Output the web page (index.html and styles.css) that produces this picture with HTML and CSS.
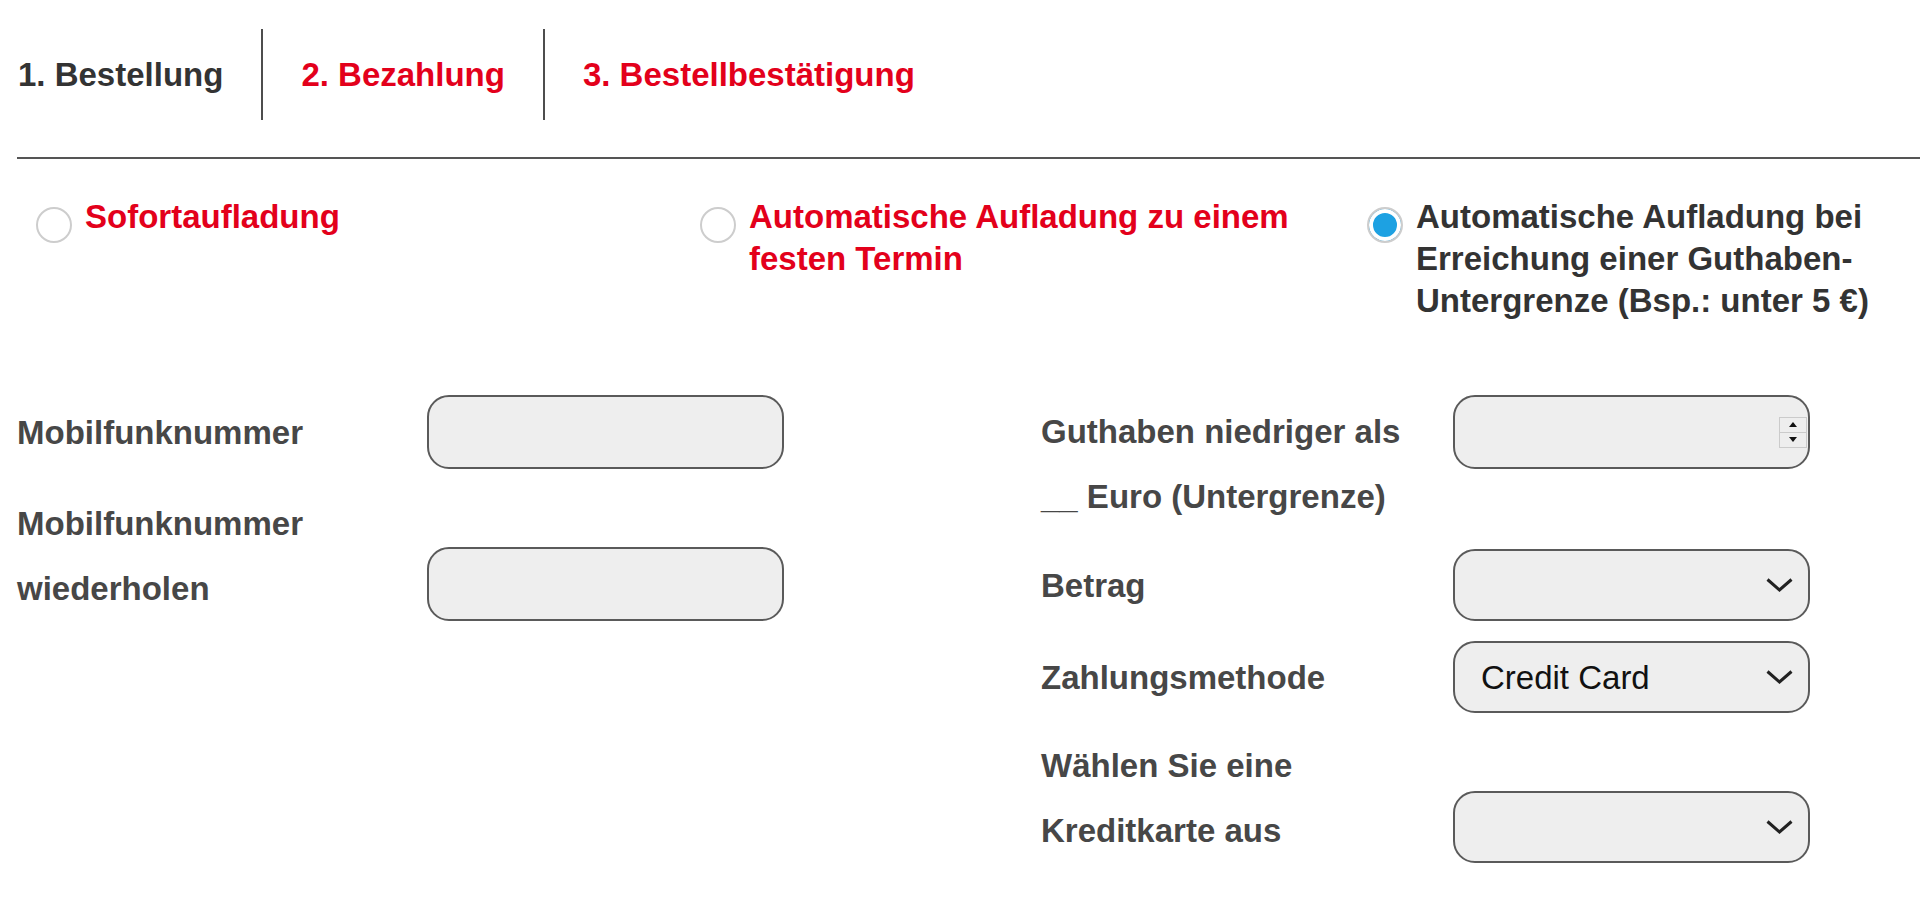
FILE: index.html
```html
<!DOCTYPE html>
<html lang="de">

<head>
  <meta charset="UTF-8">
  <title>Aufladung – Bezahlung</title>
  <link rel="stylesheet" href="styles.css">
</head>

<body>
  <div class="page">
    <ul class="steps">
      <li class="step done">1. Bestellung</li>
      <li class="step">2. Bezahlung</li>
      <li class="step">3. Bestellbestätigung</li>
    </ul>
    <hr class="divider">

    <div class="options">
      <label class="option">
        <input type="radio" name="mode">
        <span>Sofortaufladung</span>
      </label>
      <label class="option">
        <input type="radio" name="mode">
        <span>Automatische Aufladung zu einem festen Termin</span>
      </label>
      <label class="option active">
        <input type="radio" name="mode" checked>
        <span>Automatische Aufladung bei Erreichung einer Guthaben-Untergrenze (Bsp.: unter 5 €)</span>
      </label>
    </div>

    <form class="topup">
      <div class="col col-left">
        <div class="field">
          <label for="msisdn">Mobilfunknummer</label>
          <input class="text-input" id="msisdn" type="text">
        </div>
        <div class="field end">
          <label for="msisdn2">Mobilfunknummer wiederholen</label>
          <input class="text-input" id="msisdn2" type="text">
        </div>
      </div>

      <div class="col col-right">
        <div class="field start">
          <label for="limit">Guthaben niedriger als __ Euro (Untergrenze)</label>
          <div class="box">
            <input id="limit" type="number">
            <span class="spin">
              <span class="spin-btn"><svg width="8" height="5" viewBox="0 0 8 5"><path d="M0 5L4 0L8 5Z" /></svg></span>
              <span class="spin-btn"><svg width="8" height="5" viewBox="0 0 8 5"><path d="M0 0L8 0L4 5Z" /></svg></span>
            </span>
          </div>
        </div>
        <div class="field">
          <label for="amount">Betrag</label>
          <div class="box select-box">
            <select id="amount">
              <option></option>
            </select>
            <svg class="chevron" width="27" height="14" viewBox="0 0 27 14"><path d="M1.5 1.5L13.5 12L25.5 1.5" /></svg>
          </div>
        </div>
        <div class="field">
          <label for="method">Zahlungsmethode</label>
          <div class="box select-box">
            <select id="method">
              <option>Credit Card</option>
            </select>
            <svg class="chevron" width="27" height="14" viewBox="0 0 27 14"><path d="M1.5 1.5L13.5 12L25.5 1.5" /></svg>
          </div>
        </div>
        <div class="field end">
          <label for="card">Wählen Sie eine Kreditkarte aus</label>
          <div class="box select-box">
            <select id="card">
              <option></option>
            </select>
            <svg class="chevron" width="27" height="14" viewBox="0 0 27 14"><path d="M1.5 1.5L13.5 12L25.5 1.5" /></svg>
          </div>
        </div>
      </div>
    </form>
  </div>
</body>

</html>
```

FILE: styles.css
```css
body {
  margin: 0;
  font-family: "Liberation Sans", Arial, sans-serif;
  color: #333;
  background: #fff;
  overflow-x: hidden;
}

.page {
  padding-left: 17px;
}

/* steps */
.steps {
  list-style: none;
  margin: 29px 0 0;
  padding: 0 0 0 1px;
  display: flex;
}

.step {
  font-size: 33px;
  font-weight: bold;
  line-height: 91px;
  padding: 0 38px;
  color: #e3001b;
  border-left: 2px solid #4d4d4d;
}

.step.done {
  color: #333;
  padding-left: 0;
  border-left: none;
}

.divider {
  margin: 37px 0 0;
  height: 0;
  border: 0;
  border-top: 2px solid #555;
}

/* radio options */
.options {
  display: grid;
  grid-template-columns: 664px 667px 1fr;
  padding-left: 19px;
  margin-top: 37px;
}

.option {
  display: flex;
  align-items: flex-start;
  gap: 13px;
  font-size: 33px;
  font-weight: bold;
  line-height: 42px;
  color: #e3001b;
}

.option.active {
  color: #333;
}

.option input {
  appearance: none;
  -webkit-appearance: none;
  flex: none;
  box-sizing: border-box;
  width: 36px;
  height: 36px;
  margin: 11px 0 0;
  border: 2px solid #cdcdcd;
  border-radius: 50%;
  background: #fff;
}

.option input:checked {
  background: #1da1e2;
  box-shadow: inset 0 0 0 4px #fff;
}

/* form */
.topup {
  display: grid;
  grid-template-columns: 1024px 1fr;
  margin-top: 73px;
}

.col {
  display: flex;
  flex-direction: column;
  gap: 20px;
}

.col-left {
  gap: 22px;
}

.field {
  display: flex;
  align-items: center;
}

.field.start {
  align-items: flex-start;
}

.field.start label {
  margin-top: 4px;
}

.field.end {
  align-items: flex-end;
}

.field label {
  flex: 0 0 410px;
  box-sizing: border-box;
  padding-right: 30px;
  font-size: 33px;
  font-weight: bold;
  line-height: 65px;
  color: #474747;
}

.col-right .field label {
  flex-basis: 412px;
}

.text-input,
.box {
  box-sizing: border-box;
  width: 357px;
  height: 74px;
  border: 2px solid #5a5a5a;
  border-radius: 22px;
  background: #eee;
}

.text-input {
  padding: 0 26px;
  font: 33px "Liberation Sans", Arial, sans-serif;
}

.box {
  display: flex;
  align-items: center;
}

.box input {
  flex: 1;
  min-width: 0;
  height: 100%;
  padding: 0 26px;
  border: none;
  background: transparent;
  font: 33px "Liberation Sans", Arial, sans-serif;
  -moz-appearance: textfield;
}

.box input::-webkit-inner-spin-button,
.box input::-webkit-outer-spin-button {
  -webkit-appearance: none;
  margin: 0;
}

.spin {
  display: flex;
  flex-direction: column;
  box-sizing: border-box;
  width: 28px;
  height: 31px;
  margin-right: 1px;
  border: 1px solid #cbcbcb;
}

.spin-btn {
  flex: 1;
  display: flex;
  align-items: center;
  justify-content: center;
}

.spin-btn + .spin-btn {
  border-top: 1px solid #cbcbcb;
}

.spin-btn path {
  fill: #111;
}

.select-box {
  height: 72px;
}

.select-box select {
  appearance: none;
  -webkit-appearance: none;
  flex: 1;
  min-width: 0;
  height: 100%;
  padding: 0 0 0 26px;
  border: none;
  background: transparent;
  color: #111;
  font: 33px "Liberation Sans", Arial, sans-serif;
  outline: none;
}

.chevron {
  flex: none;
  margin-right: 15px;
}

.chevron path {
  fill: none;
  stroke: #222;
  stroke-width: 3;
}
```
